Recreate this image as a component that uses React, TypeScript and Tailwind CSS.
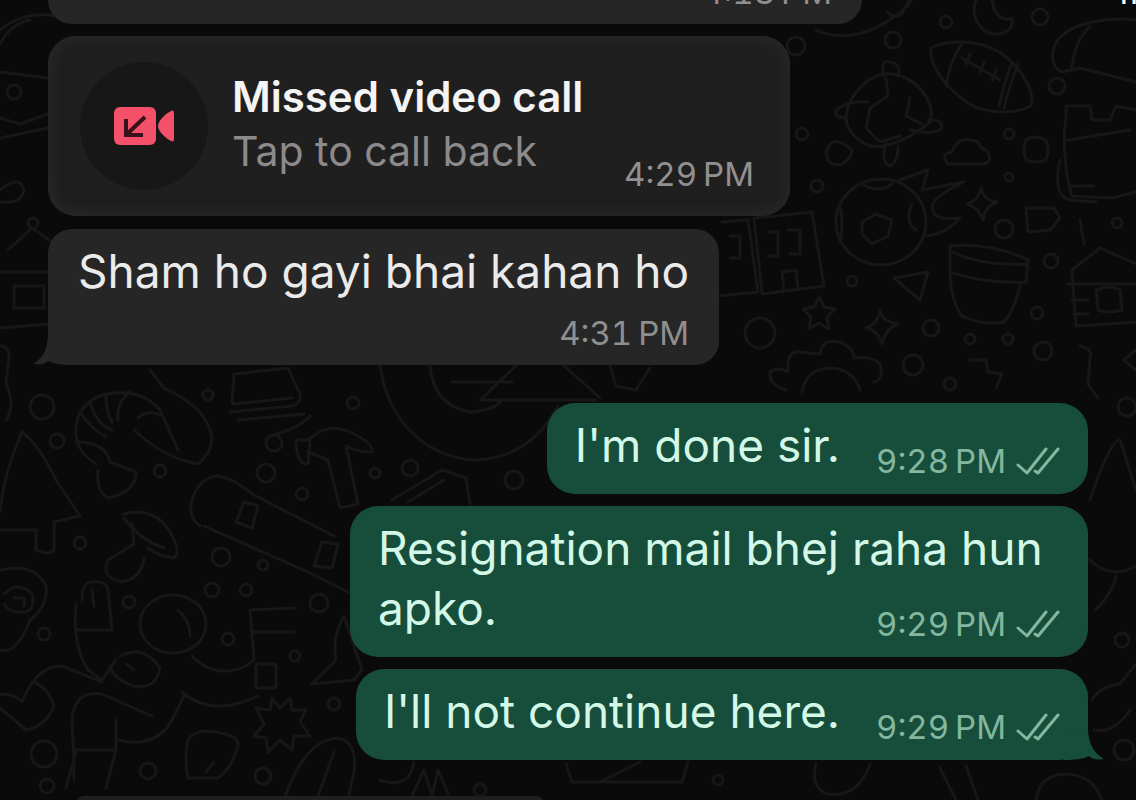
import type { ReactNode } from "react";

type Sent = { id: number; text: string; time: string; tail?: boolean };

const sent: Sent[] = [
  { id: 1, text: "I'm done sir.", time: "9:28" },
  { id: 2, text: "Resignation mail bhej raha hun apko.", time: "9:29" },
  { id: 3, text: "I'll not continue here.", time: "9:29", tail: true },
];

// [cx, cy, r]
const dots = [
  [893, 40, 8], [946, 22, 6], [1040, 17, 8], [802, 134, 6], [1057, 86, 8], [1009, 134, 5],
  [1009, 177, 4], [1004, 229, 9], [1051, 261, 7], [852, 281, 5], [1037, 313, 6], [931, 328, 8],
  [970, 339, 5], [1008, 339, 5], [1043, 351, 9], [913, 365, 10], [1117, 223, 5], [950, 384, 6],
  [760, 333, 15], [796, 46, 9], [817, 186, 6], [42, 407, 12], [208, 395, 5], [353, 403, 6],
  [57, 441, 7], [274, 443, 8], [160, 471, 6], [266, 473, 9], [302, 494, 6], [375, 473, 5],
  [80, 543, 6], [221, 557, 9], [263, 565, 5], [212, 590, 7], [246, 590, 6], [129, 602, 6],
  [319, 603, 9], [44, 634, 6], [228, 639, 6], [295, 656, 5], [334, 704, 6], [44, 754, 13],
  [148, 771, 8], [263, 776, 8], [47, 786, 7], [14, 92, 7], [33, 223, 5], [410, 468, 8],
  [514, 480, 9], [1127, 407, 9], [1124, 750, 10], [480, 790, 6], [718, 780, 5], [1122, 640, 7],
];

const doodles = [
  // planet and moon
  "M816 30c20 10 50 6 70-8 14-8 24-16 26-24M888 12q6 8 14 2l8-16",
  "M976 0c-6 16 4 34 20 34 12 0 18-8 16-16-8 4-18-2-20-18",
  // rugby ball
  "M931 48c14-8 52-10 74 8 20 16 30 38 26 50-16 8-50 10-70-8-20-16-32-36-30-50M946 86q4-26 16-42M1004 108q6-24 14-44M999 106q6-24 12-42M962 58l38 22M970 54l-4 10M984 62l-4 10M996 70l-4 10",
  // bread
  "M1136 20c-30-4-60 4-72 14-16 12-14 34-2 38l18-4 56 14M1072 68q2-26 18-42",
  // turtle
  "M846 116c4-24 24-44 46-42 26 4 44 28 38 48-14 12-28 20-46 24-16 4-38-10-38-30M884 76q-4-16 4-14 14 0 10 14M846 118q-12 0-10-8 12-10 32-8M910 130q24 6 32-2 0-10-14-8M886 78l2 18-18 12-4 20 14 14 20-6M910 98l-4 18 16 8M852 150q-20-18-26 2 2 16 16 12 10-6 10-14M886 144q-6 18 4 22 8-4 8-20",
  // cloud
  "M948 164q-8-10 4-12 6-18 26-10 4 8 8 8 8 10-2 14z",
  "M1026 140q8-6 20 0 4 10 0 20-10 4-20 0-4-10 0-20",
  // backpack
  "M1066 118l0-12 24 0 2 14 18 0 6-14 20 4M1066 120c-4 20 0 60 6 76l40 2 24-6M1068 140l62-10M1060 160q-8 36 10 40l26 2M1072 186h22",
  // soccer ball with flames
  "M836 222a45 43 0 1 0 90 0a45 43 0 1 0-90 0M862 222l14-8 16 6-4 16-16 8-10-10zM862 184q16 10 30 0M912 204q-8 18 4 26M840 242q4-22 0-34M900 180l28-10-6 20 42-8q-30 14-32 24 0 16 28 12-14 16-34 18",
  // sparkles
  "M981 188q2 12 16 14-12 4-14 18-4-12-16-16 12-4 14-16zM880 310q2 12 18 14-12 4-16 20-4-14-16-16 12-4 14-18z",
  "M819 297l5 10 11 2-8 8 2 12-10-6-10 6 2-12-8-8 11-2z",
  // pot
  "M950 246q40-4 78 14l-2 22q-40 2-76-10zM950 274q2 30 12 42 22 10 42 6 12-14 16-38M952 252q30 14 74 12",
  "M1026 208l28 0 6 10-10 12-22 2z",
  // postcards
  "M722 222l26-2 10 72-40 4M754 218l58-6 12 74-62 8zM768 232l10 0 0 24-10 0M788 230l12 0 0 24-10 0M784 290l-2-18 14-2 2 18M730 236h10v22h-10",
  "M894 278l34-6-8 28z",
  // house
  "M1072 270l28-22 36 16M1072 272l4 54 60-4M1068 284h68M1096 290q14-6 24 0l2 20q-14 4-24 0zM1072 300h16M1074 314h14M1080 220l4 24",
  // flower
  "M786 390q-18-6-16-18 8-6 18 0-2-22 12-20l20 2q2-16 20-12 14 6 14 16 18-2 26 6 4 16-6 18M802 392q4-24 30-24 22 2 28 22",
  "M970 360l16 0 2 12 14 2-6 14M1080 346q14 4 10 12l-2 26 10 14M1136 350l-12 10 12 10",
  // left side, upper
  "M0 30q30-24 70-10M0 44q10-20 30-24M0 72l48 6M0 138l48-10M0 118l20 6 28-10M0 190q20-16 24 0-2 14-24 12M8 250l24-22 20 14M0 272h48M14 286h30v22h-30zM0 328l48-4M0 346q12 0 8 20l-2 18q10 20 0 36",
  // shell
  "M96 464q-22-14-20-36 2-26 30-34 36-6 54 16l18 40M76 442q30 0 34 20l26 10q0 20-28 26-12-6-10-28M80 412q14 20 26 24M90 402q6 22 22 28M106 394q0 20 6 28M130 392q-14 10-12 28M138 418q10-10 24-2M134 430q30 28 64 34 24-20 6-46-10-16-40-30l-14-18",
  // cake and hat
  "M232 404l2-30 54-6 8 18q10 16-4 20l-62 6M234 404l58-6M238 420l66-6M270 436q30-8 40-20",
  // skateboard
  "M200 526c-20-14-4-48 16-50 20 2 26 12 40 20l78 40M204 526l104 46 40 20M244 502l14 4-6 22-16-6zM322 542l16 2-6 24-18-2z",
  // hammer
  "M308 440q22-20 46-6 20 10 18 18-14 0-26-6l12 58-18 4-12-48-20-8M296 440l14 0-2 24q-12 0-12-24",
  // tree
  "M0 530h28l8 0 0 20q14 6 18 0l0-28 26-6-24-36q-16-34-34-48-18 40-22 80",
  // mushroom
  "M124 514q30-8 46 18 12 20 4 26-16-2-26-10M124 518q16 22 40 30M132 524l2 20-26 16q-8 18 14 22 20-4 22-24",
  // fried egg
  "M0 570q34-8 46 16 2 20-16 34-14 36-30 30M4 594q14-14 28 0 4 14-6 18-16 2-22-8M14 598h10v8",
  // finger and hand
  "M76 604q-4 40 12 66l14 10 14-20M82 600q0-18 10-18 14-2 16 8l4 40M78 630h32M92 590l2 16",
  // magnifier
  "M140 624a33 29 0 1 0 66 0a33 29 0 1 0-66 0M178 610q12 10 12 26M192 656q24 24 54 10l8-6M182 692q30 26 76 4M254 658l-4-48 46-2M254 632h40M256 664h20v24h-20z",
  "M120 656q24-12 40 12-4 22-26 18-20-6-24-20M126 664l8 6",
  "M0 694q16 0 22 8 14-36 40-36l40 16M0 708l26 22q20-4 28-24-4-16-20-24M74 780q0-22-2-60 2-30 30-26l50 22M76 750h40l0-30M118 740q40 10 56-24l10-20M76 752l-10 36M116 750l-10 38",
  // starburst
  "M272 698l8 10 10-10 2 12 14 0-6 12 10 14-16 0-2 14-12-10-12 12-2-14-12-2 10-12-8-16 14 2z",
  "M188 740q8-12 28-8 24 4 22 14-6 22-20 32l-30 0q-4-20 0-38M206 772l8-10",
  "M284 800q20-60 54-62 20 4 16 34l-6 28M318 796l16-44M344 616q-12 20-8 44l-24 24 42-4 8-10z",
  // sombrero and record
  "M380 362c4 50 40 96 96 98 40-2 66-24 82-54M430 366q4 40 40 46 24-2 30-10M452 382h60M480 400l40-38M560 362l40 36M480 400h116",
  "M392 500l50-30 24 8 4 26M408 502l36-22M610 366l6 20 20 4 14-22",
  // right edge
  "M1090 500q20-60 30-60l16 50M1090 560q20 20 46 6M1096 610q18-20 20-34M1092 700q8-14 28-16l16-20M1094 730q20 4 36-20",
  "M380 780q30 10 34-18M410 800l14-30 8 26 6-26 12 28M566 764l6 18 110 0 6-20M600 782l40-20M1036 800q4-26 30-26 26 0 36 26M940 768l16 32M966 766l12 34M816 764q-6 24 12 30 30 4 42-30",
];

function Wallpaper() {
  return (
    <svg
      className="absolute inset-0 w-full h-full"
      viewBox="0 0 1136 800"
      preserveAspectRatio="xMidYMid slice"
      fill="none"
      stroke="#171718"
      strokeWidth={3}
      strokeLinecap="round"
      strokeLinejoin="round"
      aria-hidden="true"
    >
      {dots.map(([cx, cy, r], i) => (
        <circle key={i} cx={cx} cy={cy} r={r} />
      ))}
      {doodles.map((d, i) => (
        <path key={i} d={d} />
      ))}
    </svg>
  );
}

function Time({ value }: { value: string }) {
  return <time className="text-[33px] leading-10 whitespace-nowrap tabular-nums">{value}&#8201;PM</time>;
}

function Checks() {
  return (
    <svg className="w-11 h-10" viewBox="0 0 44 40" fill="none" stroke="currentColor" strokeWidth={3} strokeLinecap="round" strokeLinejoin="round">
      <path d="M2 24l9 8L30 8" />
      <path d="M19 30l3 2L42 8" />
    </svg>
  );
}

// the time floats next to the last line of text
function SentBubble({ text, time, tail }: Sent) {
  return (
    <div className="relative flow-root max-w-[738px] rounded-[28px] bg-[#174e3b] px-7 pt-3 pb-[13px] text-[46px] leading-[60px] text-[#d3f8e8]">
      {text}
      <span className="float-right flex items-center gap-2.5 ml-9 mt-[26px] text-[#83b79f]">
        <Time value={time} />
        <Checks />
      </span>
      {tail && (
        <svg className="absolute right-[-16px] bottom-0 w-10 h-10" viewBox="0 0 40 40" fill="#174e3b">
          <path d="M0 40V10L24 8c0 14 5 25 16 31-7 1-12 0-15-3-6 3-14 4-25 4z" />
        </svg>
      )}
    </div>
  );
}

function ReceivedBubble({ children, className }: { children: ReactNode; className?: string }) {
  return (
    <div className={`relative rounded-[24px] bg-[#262626] px-[30px] pb-3 flex flex-col items-end text-[#8f8f8f] ${className ?? ""}`}>
      {children}
    </div>
  );
}

export default function App() {
  return (
    <div className="relative h-screen overflow-hidden bg-[#0a0a0a] font-['Inter',sans-serif]">
      <Wallpaper />
      <span className="absolute -top-5 left-full -ml-[19px] text-2xl leading-8 font-semibold text-white">11</span>

      <main className="relative flex flex-col px-12">
        <ReceivedBubble className="-mt-10 pt-3 self-start w-full max-w-[814px]">
          <Time value="4:18" />
        </ReceivedBubble>

        <button className="mt-3 self-start flex items-center w-full max-w-[742px] h-[180px] rounded-[28px] bg-[#201f1f] shadow-[inset_0_0_8px_6px_#262626] pl-8 pr-9 text-left">
          <span className="flex items-center justify-center shrink-0 size-32 rounded-full bg-[#181717]">
            <svg className="w-16 h-10" viewBox="0 0 64 40">
              <rect x="2" y="1" width="42" height="38" rx="6" fill="#f4506a" />
              <path d="M46 20c0-6 9-13 13-15 2-1 3 0 3 2v26c0 2-1 3-3 2-4-2-13-9-13-15z" fill="#f4506a" />
              <path d="M33 11L14 29M14 13v16h17" fill="none" stroke="#3a1118" strokeWidth={4} />
            </svg>
          </span>
          <span className="flex-1 ml-6 pb-1">
            <span className="block text-[42px] leading-[54px] font-semibold text-[#f4f4f4]">Missed video call</span>
            <span className="block text-[41px] leading-[54px] text-[#8c8a8a]">Tap to call back</span>
          </span>
          <span className="self-end pb-[22px] text-[#929090]">
            <Time value="4:29" />
          </span>
        </button>

        <ReceivedBubble className="mt-[13px] pt-3 self-start">
          <p className="mb-3 text-[46px] leading-[60px] text-[#ebebeb]">Sham ho gayi bhai kahan ho</p>
          <Time value="4:31" />
          <svg className="absolute left-[-15px] bottom-0 w-10 h-10" viewBox="0 0 40 40" fill="#262626">
            <path d="M40 40V10L15 8c0 14-4 25-15 31 7 1 12 0 15-3 6 3 14 4 25 4z" />
          </svg>
        </ReceivedBubble>

        <div className="mt-[38px] flex flex-col items-end gap-3">
          {sent.map(m => (
            <SentBubble key={m.id} {...m} />
          ))}
        </div>

        <div className="mt-9 ml-7 h-14 w-full max-w-[468px] rounded-t-lg bg-[#1f1f20]" />
      </main>
    </div>
  );
}
